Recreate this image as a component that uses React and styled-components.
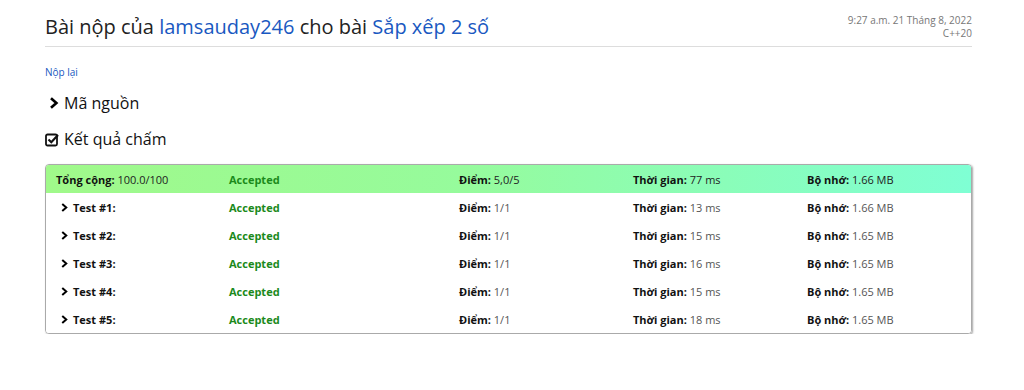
import React from 'react'
import styled, {createGlobalStyle} from 'styled-components'

const GlobalStyle = createGlobalStyle`
  body {
    margin: 0;
    background: #fff;
    font-family: "Open Sans", "Noto Sans", sans-serif;
    color: #000;
  }
`

const Page = styled.div`
  padding: 0 52px 0 45px;
`

const Header = styled.div`
  display: flex;
  justify-content: space-between;
  align-items: flex-start;
  border-bottom: 1px solid #ddd;
  padding-top: 14px;
  height: 32px;
`

const Title = styled.h2`
  margin: 0;
  font-size: 20px;
  font-weight: 400;
  color: #222;
  line-height: 26px;
`

const Link = styled.a`
  color: #1958c1;
  text-decoration: none;
`

const Meta = styled.div`
  text-align: right;
  font-size: 10px;
  line-height: 13px;
  color: #777;
`

const Resubmit = styled.a`
  display: block;
  margin-top: 18px;
  font-size: 10px;
  color: #1958c1;
  text-decoration: none;
`

const Section = styled.div`
  display: flex;
  align-items: center;
  gap: 4px;
  font-size: 16px;
  color: #111;
  height: 24px;
  margin-top: ${p => p.$top}px;
  padding-left: ${p => p.$indent || 0}px;
`

const Table = styled.div`
  margin-top: 13px;
  border: 1px solid #aaa;
  border-radius: 4px;
  box-shadow: 1px 1px 2px rgba(0, 0, 0, 0.35);
  overflow: hidden;
  font-size: 11px;
`

const Row = styled.div`
  display: grid;
  grid-template-columns: 173px 230px 174px 174px 1fr;
  align-items: center;
  height: 28px;
  padding-left: 10px;
  background: ${p => (p.$total ? 'linear-gradient(to right, #a0f98a, #96fb9c 45%, #7fffd4)' : '#fff')};
`

const Cell = styled.span`
  white-space: nowrap;
`

const Key = styled.b`
  font-weight: 700;
  color: #111;
`

const TestName = styled.span`
  display: flex;
  align-items: center;
  gap: 4px;
  padding-left: 4px;
  font-weight: 700;
  color: #111;
`

const Value = styled.span`
  color: ${p => (p.$dark ? '#222' : '#555')};
`

const Status = styled.span`
  color: #1b8a1b;
  font-weight: 700;
`

const Chevron = ({size = 10}) => (
  <svg width={size} height={size} viewBox="0 0 10 10">
    <path d="M2.5 1 L7 5 L2.5 9" fill="none" stroke="#000" strokeWidth="2.2" />
  </svg>
)

const CheckBox = () => (
  <svg width="15" height="15" viewBox="0 0 15 15">
    <rect x="1" y="2.5" width="11" height="11" rx="1.5" fill="none" stroke="#111" strokeWidth="1.8" />
    <path d="M3.5 7.5 L6.3 10.2 L13 3" fill="none" stroke="#111" strokeWidth="2.2" />
  </svg>
)

const tests = [
  {n: 1, time: 13, mem: '1.66'},
  {n: 2, time: 15, mem: '1.65'},
  {n: 3, time: 16, mem: '1.65'},
  {n: 4, time: 15, mem: '1.65'},
  {n: 5, time: 18, mem: '1.65'},
]

const Field = ({name, value, dark}) => (
  <Cell>
    <Key>{name}:</Key> <Value $dark={dark}>{value}</Value>
  </Cell>
)

export default function App() {
  return (
    <Page>
      <GlobalStyle />
      <Header>
        <Title>
          Bài nộp của <Link href="#">lamsauday246</Link> cho bài <Link href="#">Sắp xếp 2 số</Link>
        </Title>
        <Meta>
          <div>9:27 a.m. 21 Tháng 8, 2022</div>
          <div>C++20</div>
        </Meta>
      </Header>
      <Resubmit href="#">Nộp lại</Resubmit>
      <Section $top={12} $indent={3}>
        <Chevron size={12} />
        Mã nguồn
      </Section>
      <Section $top={12}>
        <CheckBox />
        Kết quả chấm
      </Section>
      <Table>
        <Row $total>
          <Field name="Tổng cộng" value="100.0/100" dark />
          <Status>Accepted</Status>
          <Field name="Điểm" value="5,0/5" dark />
          <Field name="Thời gian" value="77 ms" dark />
          <Field name="Bộ nhớ" value="1.66 MB" dark />
        </Row>
        {tests.map(t => (
          <Row key={t.n}>
            <TestName>
              <Chevron size={9} />
              Test #{t.n}:
            </TestName>
            <Status>Accepted</Status>
            <Field name="Điểm" value="1/1" />
            <Field name="Thời gian" value={`${t.time} ms`} />
            <Field name="Bộ nhớ" value={`${t.mem} MB`} />
          </Row>
        ))}
      </Table>
    </Page>
  )
}
